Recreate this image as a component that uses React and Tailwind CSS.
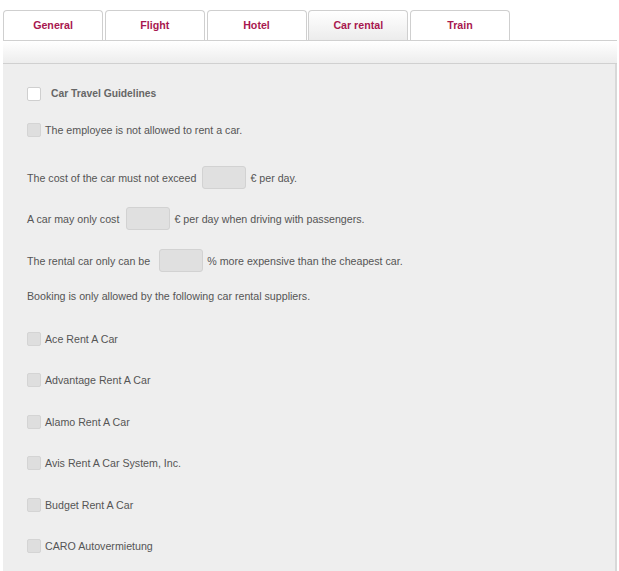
const tabs = ["General", "Flight", "Hotel", "Car rental", "Train"];

const suppliers = [
  "Ace Rent A Car",
  "Advantage Rent A Car",
  "Alamo Rent A Car",
  "Avis Rent A Car System, Inc.",
  "Budget Rent A Car",
  "CARO Autovermietung",
];

function Box() {
  return (
    <span className="h-[14px] w-[14px] shrink-0 rounded-[2px] border border-[#d4d4d4] bg-[#dedede]" />
  );
}

function Field() {
  return (
    <span className="h-[23px] w-[44px] shrink-0 rounded-[3px] border border-[#d2d2d2] bg-[#e0e0e0]" />
  );
}

export default function App() {
  return (
    <div className="min-h-[571px] bg-white pl-[3px] pr-[2px] pt-[10px] font-['Liberation_Sans',Arial,sans-serif] text-[10.67px] text-[#555]">
      <div className="flex gap-[1.75px]">
        {tabs.map((t) => (
          <div
            key={t}
            className={
              t === "Car rental"
                ? "flex h-[30px] w-[100px] items-center justify-center rounded-t-[4px] border border-b-0 border-[#cfcfcf] bg-gradient-to-b from-white to-[#ececec] text-[10.67px] font-bold text-[#a8184f]"
                : "flex h-[30px] w-[100px] items-center justify-center rounded-t-[4px] border border-b-0 border-[#cfcfcf] bg-white text-[10.67px] font-bold text-[#a8184f]"
            }
          >
            <span className="-mt-[2px]">{t}</span>
          </div>
        ))}
      </div>
      <div className="h-[24px] border-y border-[#d0d0d0] bg-gradient-to-b from-white to-[#ededed]" />
      <div className="min-h-[507px] border-r-2 border-[#d8d8d8] bg-[#eeeeee] px-[24px] pb-[16px] pt-[23px]">
        <div className="flex h-[14px] items-center gap-[10px]">
          <span className="h-[14px] w-[14px] rounded-[2px] border border-[#cfcfcf] bg-white" />
          <span className="text-[10.3px] font-bold text-[#666]">Car Travel Guidelines</span>
        </div>
        <div className="mt-[22px] flex h-[14px] items-center gap-[4px]">
          <Box />
          <span>The employee is not allowed to rent a car.</span>
        </div>
        <div className="mt-[29px] flex h-[23px] items-center">
          <span>The cost of the car must not exceed</span>
          <span className="ml-[6px] mr-[4px] flex"><Field /></span>
          <span>€ per day.</span>
        </div>
        <div className="mt-[18px] flex h-[23px] items-center">
          <span>A car may only cost</span>
          <span className="ml-[7px] mr-[4px] flex"><Field /></span>
          <span>€ per day when driving with passengers.</span>
        </div>
        <div className="mt-[19px] flex h-[23px] items-center">
          <span>The rental car only can be</span>
          <span className="ml-[9px] mr-[4px] flex"><Field /></span>
          <span>% more expensive than the cheapest car.</span>
        </div>
        <div className="mt-[17px] flex h-[14px] items-center">
          Booking is only allowed by the following car rental suppliers.
        </div>
        <div className="mt-[29px] flex flex-col gap-[27.4px]">
          {suppliers.map((s) => (
            <div key={s} className="flex h-[14px] items-center gap-[4px]">
              <Box />
              <span>{s}</span>
            </div>
          ))}
        </div>
      </div>
    </div>
  );
}
